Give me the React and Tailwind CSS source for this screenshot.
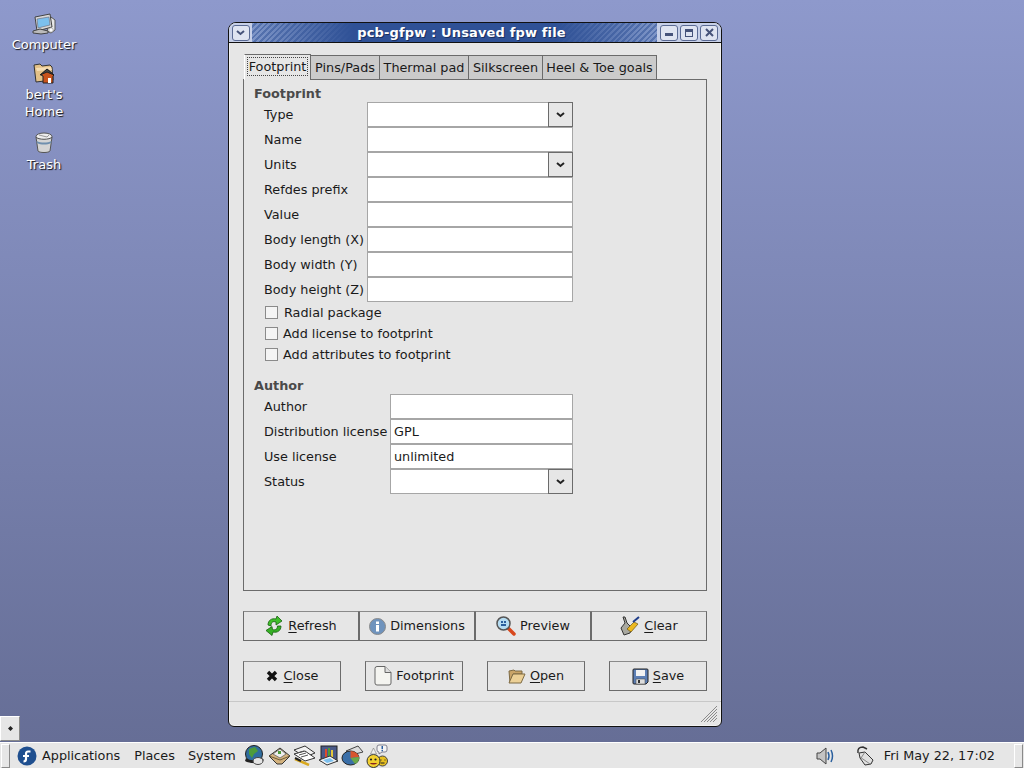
import React from 'react';

const font = { fontFamily: '"DejaVu Sans", sans-serif' };

// desktop icons
const ComputerIcon = () => (
  <svg width="24" height="22" viewBox="0 0 24 22">
    <path d="M19 4l4 3 0 10-4 3-4-2z" fill="#e8e8e8" stroke="#555" />
    <path d="M3 4L18 1l2 13-15 4z" fill="#d8d8d8" stroke="#444" />
    <path d="M5 6l12-2 1 8-12 3z" fill="#7cc0ee" stroke="#667" strokeWidth=".6" />
    <path d="M1 18l7-2 8 2v2l-7 1-8-1z" fill="#bbb" stroke="#444" />
    <circle cx="19" cy="17" r="2.200" fill="#fff" stroke="#888" strokeWidth=".6" />
  </svg>
);
const HomeIcon = () => (
  <svg width="22" height="22" viewBox="0 0 22 22">
    <path d="M1 3l6-1 2 2 8-1 2 2 1 13-17 2z" fill="#e4c188" stroke="#333" />
    <path d="M3 6l15-1 1 3-15 1z" fill="#f6deb4" />
    <path d="M8 13l6-6 7 6-1 1v7H10v-7z" fill="#c9531c" stroke="#222" />
    <path d="M7 13l7-6 7 6-7-3z" fill="#444" stroke="#222" />
    <rect x="15" y="16" width="3" height="5" fill="#fff" />
  </svg>
);
const TrashIcon = () => (
  <svg width="20" height="22" viewBox="0 0 20 22">
    <ellipse cx="10" cy="4.500" rx="8" ry="3.500" fill="#eee" stroke="#555" />
    <path d="M2 5l2 14c1 2 11 2 12 0l2-14c-2 3-14 3-16 0z" fill="#d4d4d4" stroke="#555" />
    <path d="M2.600 9c4 2 11 2 14.800 0l-.3 2c-4 2-10 2-14.200 0z" fill="#6f8fae" />
    <path d="M5 3l8 2 2-2" fill="none" stroke="#999" />
  </svg>
);

// window buttons
const Chevron = ({ className = 'text-[#222]' }) => (
  <svg width="9" height="6" viewBox="0 0 9 6" className={className}>
    <path d="M1 1l3.500 3L8 1" fill="none" stroke="currentColor" strokeWidth="2" />
  </svg>
);
const WmButton = ({ children }) => (
  <div className="flex h-[16px] w-[18px] items-center justify-center rounded-[3px] border border-[#5a6a94] bg-[#dfe4f1] text-[#46537a]">
    {children}
  </div>
);

// button icons
const RefreshIcon = () => (
  <svg width="19" height="20" viewBox="0 0 19 20">
    <path d="M3 9C3 4 7 2 11 3l1-3 5 5-6 4 0-3C8 5 6 6 6 10z" fill="#3fbf2a" stroke="#16600f" strokeWidth=".8" />
    <path d="M16 10c0 5-4 7-8 6l-1 3.500-6-5 6-4 .5 3c3 1 5-.5 5-3.500z" fill="#35b024" stroke="#16600f" strokeWidth=".8" />
  </svg>
);
const InfoIcon = () => (
  <svg width="17" height="17" viewBox="0 0 17 17">
    <circle cx="8.500" cy="8.500" r="8" fill="#6f93bd" stroke="#8a8a8a" />
    <rect x="7" y="7" width="3" height="6.500" fill="#fff" />
    <rect x="7" y="3.500" width="3" height="2.500" fill="#fff" />
  </svg>
);
const PreviewIcon = () => (
  <svg width="20" height="20" viewBox="0 0 20 20">
    <path d="M12 12l6 6" stroke="#d8481e" strokeWidth="3.500" strokeLinecap="round" />
    <circle cx="7.500" cy="7.500" r="6.500" fill="#b5dcf2" stroke="#555" strokeWidth="1.500" />
    <rect x="5" y="5" width="2" height="2" fill="#2a5f9e" />
    <rect x="8" y="5" width="2" height="2" fill="#2a5f9e" />
    <rect x="5" y="8" width="5" height="2" fill="#2a5f9e" />
  </svg>
);
const ClearIcon = () => (
  <svg width="20" height="20" viewBox="0 0 20 20">
    <path d="M3 1l2 6-4 5 3 7 6-2 2-5-5-5-2-6z" fill="#a8a8a0" stroke="#333" />
    <path d="M7 13l7-7 4 2-7 8z" fill="#ecb820" stroke="#6b5510" strokeWidth=".7" />
    <path d="M13 6l6-5" stroke="#1f3d8a" strokeWidth="2" />
  </svg>
);
const CloseIcon = () => (
  <svg width="12" height="12" viewBox="0 0 12 12">
    <path d="M2 2l8 8M10 2l-8 8" stroke="#111" strokeWidth="3.400" />
  </svg>
);
const FileIcon = () => (
  <svg width="18" height="20" viewBox="0 0 18 20">
    <path d="M1 2.500q0-2 2-2h8l6 6V17q0 2-2 2H3q-2 0-2-2z" fill="#f4f4f0" stroke="#666" />
    <path d="M11 .500v6h6" fill="#ddd" stroke="#666" />
  </svg>
);
const OpenIcon = () => (
  <svg width="18" height="16" viewBox="0 0 18 16">
    <path d="M1 3l5-1 1 1h7v3H5l-3 9z" fill="#c9a468" stroke="#7d6a44" />
    <path d="M5 6h12l-4 9H1z" fill="#ecd096" stroke="#7d6a44" />
  </svg>
);
const SaveIcon = () => (
  <svg width="17" height="17" viewBox="0 0 17 17">
    <path d="M1 2q0-1 1-1h13q1 0 1 1v12l-2 2H2q-1 0-1-1z" fill="#5d7fb5" stroke="#222" />
    <rect x="4" y="2" width="9" height="6" fill="#f2f2f2" />
    <rect x="4" y="11" width="9" height="5" fill="#ddd" stroke="#444" strokeWidth=".5" />
    <rect x="6" y="12" width="2" height="3" fill="#333" />
  </svg>
);

// panel icons
const FedoraIcon = () => (
  <svg width="20" height="20" viewBox="0 0 20 20">
    <circle cx="10" cy="10" r="9.500" fill="#1f4f8f" />
    <path d="M13.500 5.500H11q-2 0-2 2.500v5q0 2.500-2.500 2.500M6 10h6" fill="none" stroke="#fff" strokeWidth="2.200" />
  </svg>
);
const GlobeIcon = () => (
  <svg width="22" height="21" viewBox="0 0 22 21">
    <circle cx="10" cy="9" r="8.500" fill="#2f6d9e" stroke="#222" />
    <path d="M5 4l6-2 3 4-4 3-2 4-3-4z" fill="#4d9c3a" />
    <path d="M2 13c4 3 11 3 16 0l2 2c-4 4-14 4-19 1z" fill="#222" />
    <ellipse cx="14" cy="16" rx="5" ry="3.500" fill="#e4e4e4" stroke="#444" />
  </svg>
);
const MailIcon = () => (
  <svg width="23" height="20" viewBox="0 0 23 20">
    <path d="M1 10L12 2l10 8-8 8H9z" fill="#d3b27e" stroke="#333" />
    <path d="M5 8l7-5 6 5-6 4z" fill="#eee" stroke="#555" strokeWidth=".7" />
    <rect x="10" y="5" width="3" height="3" fill="#4d9c3a" />
    <path d="M1 10l11 4 10-4" fill="none" stroke="#6b5a3a" />
  </svg>
);
const WriterIcon = () => (
  <svg width="23" height="21" viewBox="0 0 23 21">
    <path d="M1 5l11-4 10 7-10 4z" fill="#f2f2f2" stroke="#333" />
    <path d="M1 9l11-3 10 7-10 3z" fill="#fff" stroke="#333" />
    <path d="M4 8l7-2M6 10l7-2M8 12l7-2" stroke="#555" />
    <path d="M2 14l14 6" stroke="#d8a81e" strokeWidth="2.500" />
    <path d="M2 13l6 3" stroke="#222" strokeWidth="2" />
  </svg>
);
const ImpressIcon = () => (
  <svg width="21" height="21" viewBox="0 0 21 21">
    <rect x="3" y="1" width="16" height="15" fill="#4a5a88" stroke="#222" />
    <rect x="7" y="4" width="2" height="9" fill="#e04a2a" />
    <rect x="10" y="3" width="2" height="10" fill="#4d9c3a" />
    <rect x="13" y="5" width="2" height="8" fill="#e4c83a" />
    <path d="M1 15l11-4 8 5-11 4z" fill="#f2f2f2" stroke="#333" />
    <path d="M5 15l7-2 4 3-7 2z" fill="#7cc0ee" />
  </svg>
);
const CalcIcon = () => (
  <svg width="23" height="21" viewBox="0 0 23 21">
    <path d="M5 6L17 1l5 6-12 3z" fill="#dcdcdc" stroke="#444" />
    <ellipse cx="9.500" cy="13" rx="8.500" ry="7" fill="#3a6fa8" stroke="#222" />
    <path d="M9.500 13V6a8.500 7 0 0 1 8.500 6z" fill="#d8552e" />
    <path d="M9.500 13l8.500-1a8.500 7 0 0 1-4 7z" fill="#6aa84a" />
  </svg>
);
const SmileyIcon = () => (
  <svg width="22" height="24" viewBox="0 0 22 24">
    <path d="M11 3q0-2 2-2h6q2 0 2 2v3q0 2-2 2h-3l-3 2V8q-2 0-2-2z" fill="#f4f4f4" stroke="#667" strokeWidth=".8" />
    <rect x="15.500" y="2" width="1.500" height="3" fill="#2a5f9e" />
    <rect x="15.500" y="5.800" width="1.500" height="1.500" fill="#2a5f9e" />
    <circle cx="16.500" cy="17" r="5" fill="#e8c020" stroke="#444" />
    <circle cx="7.500" cy="17" r="6.500" fill="#f2d030" stroke="#333" />
    <circle cx="5" cy="15.500" r="1.100" fill="#222" />
    <circle cx="9.500" cy="15.500" r="1.100" fill="#222" />
    <path d="M3.500 19q4 3 8 0z" fill="#822" />
    <path d="M14.500 16h1M18.500 16h1M14.500 19h4" stroke="#222" />
    <path d="M4.500 10l3-6 3 6z" fill="#eee" stroke="#777" strokeWidth=".6" />
  </svg>
);
const SpeakerIcon = () => (
  <svg width="19" height="18" viewBox="0 0 19 18">
    <path d="M1 6h3l6-5v16l-6-5H1z" fill="#c4c4c4" stroke="#444" />
    <path d="M12 5q2 4 0 8M15 3q3 6 0 12" fill="none" stroke="#2a5f9e" strokeWidth="1.500" />
  </svg>
);
const MouseIcon = () => (
  <svg width="20" height="20" viewBox="0 0 20 20">
    <path d="M2 7Q1 1 7 1l4 2" fill="none" stroke="#333" strokeWidth="1.500" />
    <path d="M3 7l6-1 8 8-2 4-6 1-5-7z" fill="#e0e0e0" stroke="#333" />
    <path d="M4 11l10 7" stroke="#888" />
    <path d="M9 6l-4 6" stroke="#888" />
  </svg>
);

const Handle = ({ className }) => (
  <div className={`h-[24px] w-[9px] border border-[#8a8a8a] border-t-white border-l-white bg-[#e6e6e6] ${className}`} />
);

const tabs = [
  { label: 'Footprint', width: 'w-[67px]', active: true },
  { label: 'Pins/Pads', width: 'w-[69px]' },
  { label: 'Thermal pad', width: 'w-[89px]' },
  { label: 'Silkscreen', width: 'w-[74px]' },
  { label: 'Heel & Toe goals', width: 'w-[114px]' },
];

const Tab = ({ label, width, active }) =>
  active ? (
    <div className={`z-10 -mb-px flex h-[26px] ${width} items-center justify-center border border-b-0 border-[#6b6b6b] border-l-white bg-[#e6e6e6] pb-[2px]`}>
      <span className="border border-dotted border-[#444] px-[1px] leading-[17px]">{label}</span>
    </div>
  ) : (
    <div className={`flex h-[24px] ${width} items-center justify-center border border-l-0 border-b-0 border-[#6b6b6b] bg-[#cbcbcb]`}>
      {label}
    </div>
  );

const Row = ({ label, labelWidth, combo, value }) => (
  <div className={`grid h-[25px] ${labelWidth} items-center`}>
    <div className="pl-[10px] whitespace-nowrap">{label}</div>
    {combo ? (
      <div className="flex h-[25px]">
        <div className="flex-1 border border-r-0 border-[#a6a6a6] bg-white" />
        <div className="flex w-[25px] items-center justify-center border border-[#6b6b6b] bg-[#e6e6e6] pr-[1px]">
          <Chevron />
        </div>
      </div>
    ) : (
      <div className="flex h-[25px] items-center border border-[#a6a6a6] bg-white px-[3px]">{value}</div>
    )}
  </div>
);

const Check = ({ label, gap }) => (
  <div className="flex h-[21px] items-center pl-[11px]">
    <div className="h-[13px] w-[13px] border border-[#8a8a8a] bg-[#f4f4f4]" />
    <span className={gap}>{label}</span>
  </div>
);

// label with one underlined mnemonic letter
const Mnemonic = ({ first, rest }) => (
  <span>
    <span className="underline underline-offset-2">{first}</span>
    {rest}
  </span>
);

const ActionButton = ({ icon, className, gap = 'gap-[4px]', children }) => (
  <div className={`flex h-[30px] items-center justify-center ${gap} border border-[#6b6b6b] border-t-[#8a8a8a] bg-[#e6e6e6] ${className}`}>
    {icon}
    {children}
  </div>
);

export default function App() {
  return (
    <div style={font} className="flex h-[768px] w-[1024px] flex-col overflow-hidden text-[12.8px] text-[#1a1a1a]">
      <div className="relative flex-1 bg-gradient-to-b from-[#8e99cc] to-[#666e96]">
        {/* desktop icons */}
        <div className="flex w-[88px] flex-col items-center pt-[13px] text-[13px] leading-[17px] text-white [text-shadow:1px_1px_1px_#111]">
          <ComputerIcon />
          <div className="mt-[1px]">Computer</div>
          <div className="mt-[9px]"><HomeIcon /></div>
          <div className="mt-[2px] text-center">bert's<br />Home</div>
          <div className="mt-[12px]"><TrashIcon /></div>
          <div className="mt-[2px]">Trash</div>
        </div>

        {/* the window */}
        <div className="absolute top-[22px] left-[228px] flex h-[705px] w-[494px] flex-col overflow-hidden rounded-t-[8px] rounded-b-[6px] border border-[#111] bg-[#e6e6e6] shadow-[inset_0_0_0_1px_#f2f2f2]">
          <div className="flex h-[20px] shrink-0 border-b border-[#111]">
            <div className="flex w-[23px] items-center justify-center bg-[#c7d0e8]">
              <WmButton><Chevron className="text-[#46537a]" /></WmButton>
            </div>
            <div className="relative flex flex-1 items-center justify-center bg-[linear-gradient(90deg,#7f96c8_0%,#2f5196_25%,#2f5196_75%,#7f96c8_100%)] pl-[14px] text-[13px] font-bold tracking-[0.15px] text-white [text-shadow:1px_1px_0_#1a2f5e]">
              <div className="absolute inset-0 bg-[repeating-linear-gradient(135deg,transparent_0,transparent_2px,#2f519680_2px,#2f519680_4px)]" />
              <span className="relative">pcb-gfpw : Unsaved fpw file</span>
            </div>
            <div className="flex w-[64px] items-center justify-center gap-[2px] bg-[#c7d0e8]">
              <WmButton><div className="mt-[4px] h-[3px] w-[8px] bg-[#46537a]" /></WmButton>
              <WmButton><div className="h-[8px] w-[8px] border border-t-[3px] border-[#46537a]" /></WmButton>
              <WmButton>
                <svg width="9" height="9" viewBox="0 0 9 9"><path d="M1 1l7 7M8 1L1 8" stroke="#46537a" strokeWidth="2" /></svg>
              </WmButton>
            </div>
          </div>

          <div className="flex flex-1 flex-col px-[14px] pt-[11px]">
            <div className="flex h-[25px] items-end pl-[1px]">
              {tabs.map((t) => (
                <Tab key={t.label} {...t} />
              ))}
            </div>

            <div className="flex h-[512px] flex-col border border-[#6b6b6b] pt-[5px] pr-[133px] pl-[10px]">
              <div className="font-bold leading-[17px] text-[#4a4a4a]">Footprint</div>
              <Row label="Type" labelWidth="grid-cols-[113px_1fr]" combo />
              <Row label="Name" labelWidth="grid-cols-[113px_1fr]" />
              <Row label="Units" labelWidth="grid-cols-[113px_1fr]" combo />
              <Row label="Refdes prefix" labelWidth="grid-cols-[113px_1fr]" />
              <Row label="Value" labelWidth="grid-cols-[113px_1fr]" />
              <Row label="Body length (X)" labelWidth="grid-cols-[113px_1fr]" />
              <Row label="Body width (Y)" labelWidth="grid-cols-[113px_1fr]" />
              <Row label="Body height (Z)" labelWidth="grid-cols-[113px_1fr]" />
              <Check label="Radial package" gap="ml-[6px]" />
              <Check label="Add license to footprint" gap="ml-[5px]" />
              <Check label="Add attributes to footprint" gap="ml-[5px]" />
              <div className="mt-[12px] font-bold leading-[17px] text-[#4a4a4a]">Author</div>
              <Row label="Author" labelWidth="grid-cols-[136px_1fr]" />
              <Row label="Distribution license" labelWidth="grid-cols-[136px_1fr]" value="GPL" />
              <Row label="Use license" labelWidth="grid-cols-[136px_1fr]" value="unlimited" />
              <Row label="Status" labelWidth="grid-cols-[136px_1fr]" combo />
            </div>

            <div className="mt-[20px] grid grid-cols-4">
              <ActionButton icon={<RefreshIcon />}><Mnemonic first="R" rest="efresh" /></ActionButton>
              <ActionButton icon={<InfoIcon />}>Dimensions</ActionButton>
              <ActionButton icon={<PreviewIcon />}>Preview</ActionButton>
              <ActionButton icon={<ClearIcon />}><Mnemonic first="C" rest="lear" /></ActionButton>
            </div>

            <div className="mt-[20px] flex justify-between">
              <ActionButton className="w-[98px]" gap="gap-[6px]" icon={<CloseIcon />}><Mnemonic first="C" rest="lose" /></ActionButton>
              <ActionButton className="w-[98px]" icon={<FileIcon />}>Footprint</ActionButton>
              <ActionButton className="w-[98px]" icon={<OpenIcon />}><Mnemonic first="O" rest="pen" /></ActionButton>
              <ActionButton className="w-[98px]" icon={<SaveIcon />}><Mnemonic first="S" rest="ave" /></ActionButton>
            </div>
          </div>

          <div className="relative h-[25px] shrink-0 border-t border-[#c8c8c8]">
            <svg width="18" height="18" viewBox="0 0 18 18" className="absolute right-[3px] bottom-[3px]">
              <path d="M17 1L1 17M17 4L4 17M17 7L7 17M17 10L10 17M17 13L13 17" stroke="#8a8a8a" />
            </svg>
          </div>
        </div>

        {/* show desktop button */}
        <div className="absolute bottom-[1px] left-0 flex h-[25px] w-[20px] items-center justify-center border border-[#8a8a8a] border-t-white border-l-white bg-[#e6e6e6]">
          <svg width="5" height="5" viewBox="0 0 5 5"><path d="M2.500 0L5 2.500 2.500 5 0 2.500z" fill="#222" /></svg>
        </div>
      </div>

      {/* bottom panel */}
      <div className="flex h-[26px] shrink-0 items-center border-t border-white bg-[#e6e6e6]">
        <Handle className="ml-[1px]" />
        <div className="ml-[7px]"><FedoraIcon /></div>
        <span className="ml-[5px]">Applications</span>
        <span className="ml-[14px]">Places</span>
        <span className="ml-[13px]">System</span>
        <div className="ml-[8px] flex items-center gap-[2px]">
          <GlobeIcon />
          <MailIcon />
          <WriterIcon />
          <ImpressIcon />
          <CalcIcon />
          <SmileyIcon />
        </div>
        <div className="ml-auto"><SpeakerIcon /></div>
        <div className="ml-[21px]"><MouseIcon /></div>
        <span className="ml-[8px]">Fri May 22, 17:02</span>
        <Handle className="mr-[1px] ml-[19px]" />
      </div>
    </div>
  );
}
